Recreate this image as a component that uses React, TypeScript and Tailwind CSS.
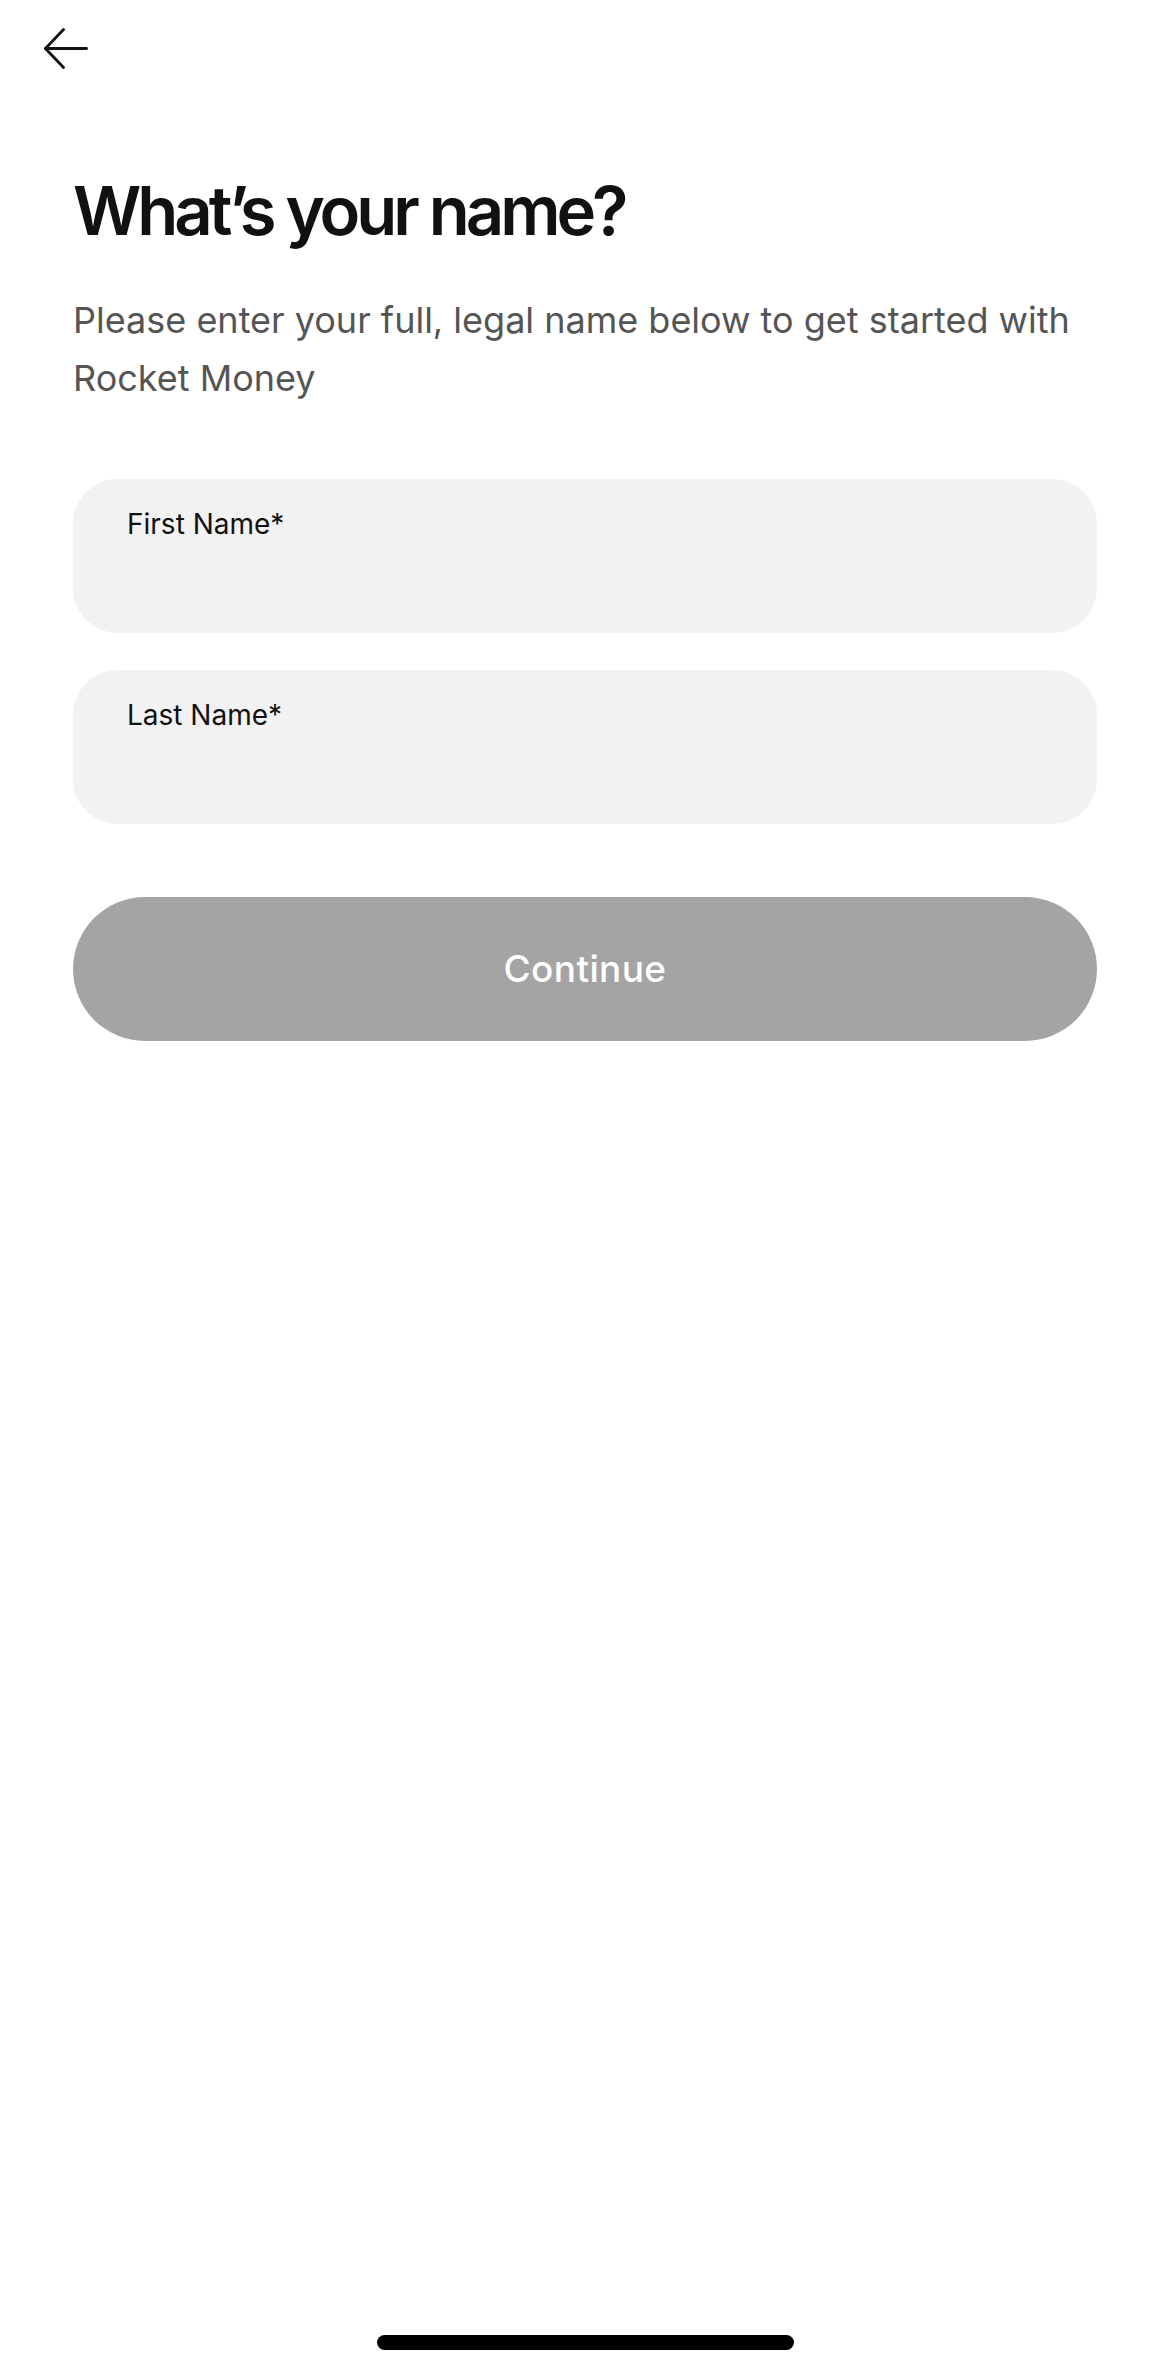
import { useState } from "react";

const font = { fontFamily: '"Inter", "Noto Sans", sans-serif' };

const BackArrow = () => (
  <svg width="44" height="42" viewBox="0 0 44 42" fill="none" stroke="#111111" strokeWidth="2.8" strokeLinecap="round" strokeLinejoin="round">
    <path d="M19.5 1.5 L1.5 20.5 L19.5 39.5" />
    <path d="M1.5 20.5 H42.5" />
  </svg>
);

const NameField = ({ label, value, onChange }: { label: string; value: string; onChange: (v: string) => void }) => (
  <label className="flex h-[154px] flex-col rounded-[45px] bg-[#f2f2f2] pl-[54px] pr-[40px] pt-[28px]">
    <span className="text-[28px] leading-[34px] text-[#111111]">{label}</span>
    <input
      value={value}
      onChange={(e) => onChange(e.target.value)}
      className="mt-[8px] bg-transparent text-[34px] text-[#111111] outline-none"
    />
  </label>
);

const App = () => {
  const [first, setFirst] = useState("");
  const [last, setLast] = useState("");
  const ready = first.trim() !== "" && last.trim() !== "";

  return (
    <div className="flex min-h-[2374px] w-full flex-col bg-white" style={font}>
      {/* Top bar */}
      <div className="pl-[44px] pt-[28px]">
        <button className="block">
          <BackArrow />
        </button>
      </div>

      <div className="px-[73px]">
        <h1 className="mt-[107px] text-[67px] font-semibold leading-[67px] tracking-[-0.06em] text-[#111111]">
          What’s your name?
        </h1>
        <p className="mt-[47px] text-[36px] leading-[58px] text-[#555555]">
          Please enter your full, legal name below to get started with Rocket Money
        </p>

        <div className="mt-[72px] flex flex-col gap-[37px]">
          <NameField label="First Name*" value={first} onChange={setFirst} />
          <NameField label="Last Name*" value={last} onChange={setLast} />
        </div>

        <button
          disabled={!ready}
          className={`mt-[73px] flex h-[144px] w-full items-center justify-center rounded-full text-[37px] font-medium tracking-[0.01em] text-white ${
            ready ? "bg-[#111111]" : "bg-[#a4a4a4]"
          }`}
        >
          Continue
        </button>
      </div>

      {/* Home indicator */}
      <div className="mt-auto flex justify-center pb-[24px]">
        <div className="h-[15px] w-[417px] rounded-full bg-black" />
      </div>
    </div>
  );
};

export default App;
